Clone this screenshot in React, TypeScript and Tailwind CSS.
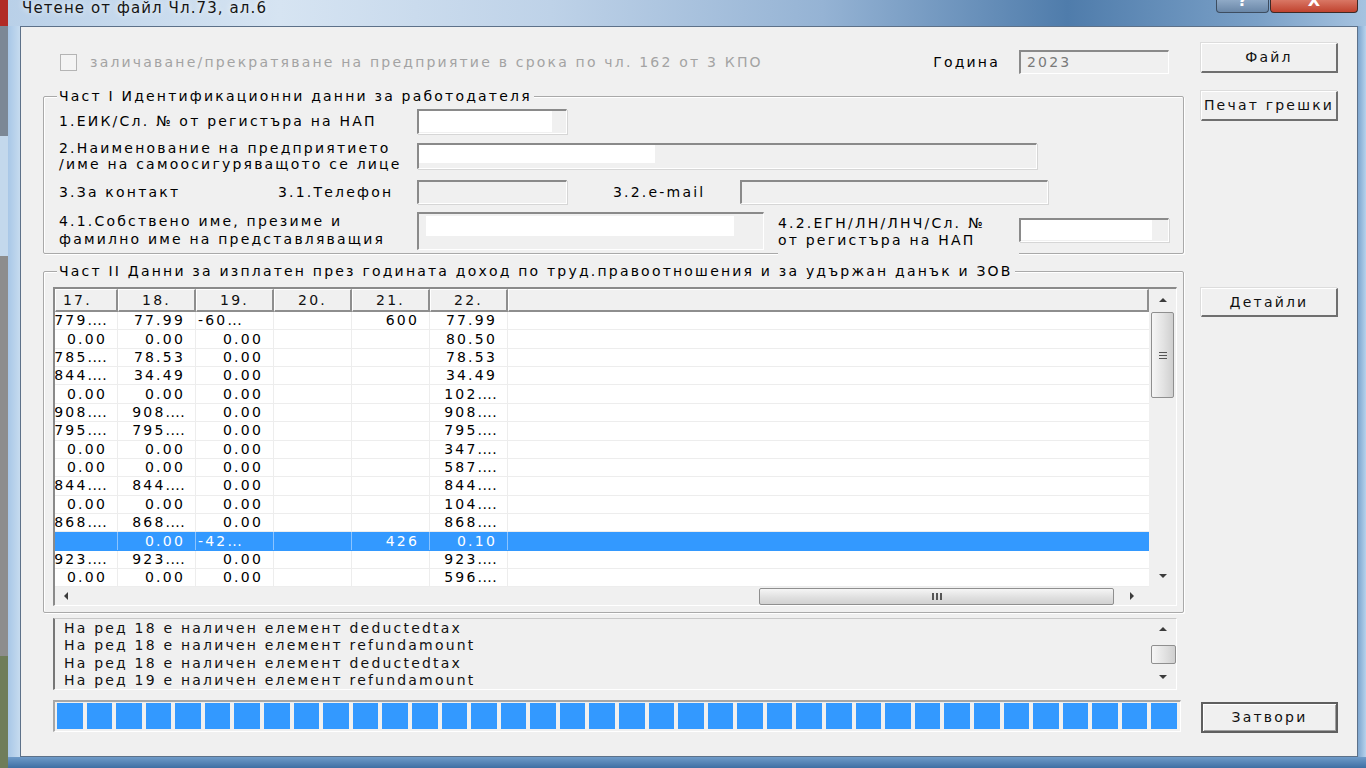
import React from "react";

const ROWS: string[][] = [
  ["7779....", "77.99", "-60...", "", "600", "77.99"],
  ["0.00", "0.00", "0.00", "", "", "80.50"],
  ["1785....", "78.53", "0.00", "", "", "78.53"],
  ["2844....", "34.49", "0.00", "", "", "34.49"],
  ["0.00", "0.00", "0.00", "", "", "102...."],
  ["1908....", "908....", "0.00", "", "", "908...."],
  ["1795....", "795....", "0.00", "", "", "795...."],
  ["0.00", "0.00", "0.00", "", "", "347...."],
  ["0.00", "0.00", "0.00", "", "", "587...."],
  ["2844....", "844....", "0.00", "", "", "844...."],
  ["0.00", "0.00", "0.00", "", "", "104...."],
  ["1868....", "868....", "0.00", "", "", "868...."],
  ["", "0.00", "-42...", "", "426", "0.10"],
  ["1923....", "923....", "0.00", "", "", "923...."],
  ["0.00", "0.00", "0.00", "", "", "596...."],
];
const SELECTED = 12;

const LOG = [
  "На ред 18 е наличен елемент deductedtax",
  "На ред 18 е наличен елемент refundamount",
  "На ред 18 е наличен елемент deductedtax",
  "На ред 19 е наличен елемент refundamount",
];

const COL_W = ["w-[63px]", "w-[78px]", "w-[78px]", "w-[78px]", "w-[78px]", "w-[78px]"];

function Arrow({ dir }: { dir: "up" | "down" | "left" | "right" }) {
  const pts = {
    up: "0,4 4,0 8,4",
    down: "0,0 8,0 4,4",
    left: "4,0 4,8 0,4",
    right: "0,0 0,8 4,4",
  }[dir];
  const vertical = dir === "up" || dir === "down";
  return (
    <svg width={vertical ? 8 : 4} height={vertical ? 4 : 8} viewBox={vertical ? "0 0 8 4" : "0 0 4 8"}>
      <polygon points={pts} fill="#3c3c3c" />
    </svg>
  );
}

// truncated grid values: the dots sit tighter than the digits
function CellText({ v }: { v: string }) {
  const i = v.indexOf("...");
  if (i < 0) return <span className="shrink-0">{v}</span>;
  return (
    <span className="shrink-0">
      {v.slice(0, i)}
      <span className="tracking-[0.4px]">{v.slice(i)}</span>
    </span>
  );
}

function Button({ children, def, className }: { children: React.ReactNode; def?: boolean; className: string }) {
  return (
    <div
      className={`${className} w-[137px] flex items-center justify-center bg-[#f0f0f0] text-[#111] ${
        def
          ? "border-2 border-[#5f5f5f] shadow-[inset_1px_1px_0_#fff,inset_-1px_-1px_0_#a0a0a0]"
          : "border-t border-l border-t-white border-l-white border-r-2 border-b-2 border-r-[#6f6f6f] border-b-[#6f6f6f] shadow-[-1px_-1px_0_#dcdcdc]"
      }`}
    >
      <span>{children}</span>
    </div>
  );
}

function Field({ className, fill }: { className: string; fill?: string }) {
  return (
    <div
      className={`${className} shrink-0 bg-[#f0f0f0] border-t-2 border-l-2 border-t-[#8a8a8a] border-l-[#8a8a8a] border-b border-r border-b-white border-r-white shadow-[1px_1px_0_#d6d6d6]`}
    >
      {fill && <div className={`${fill} bg-white`} />}
    </div>
  );
}

function HeaderCell({ w, children, left }: { w: string; children?: React.ReactNode; left?: boolean }) {
  return (
    <div
      className={`${w} shrink-0 h-full flex items-center ${
        left ? "pl-[7px]" : "justify-center"
      } bg-[#f0f0f0] border-t border-l border-t-white border-l-white border-r-2 border-b-2 border-r-[#8e8e8e] border-b-[#8e8e8e] text-[#111]`}
    >
      {children}
    </div>
  );
}

export default function App() {
  return (
    <div className="w-[1366px] h-[768px] overflow-hidden flex bg-[#6b6b6b] font-['DejaVu_Sans',sans-serif] text-[14px] tracking-[2.2px] text-black">
      {/* desktop strip behind */}
      <div className="w-[8px] flex flex-col">
        <div className="h-[26px] bg-[#b12a25]" />
        <div className="h-[110px] bg-[#7c8896]" />
        <div className="h-[120px] bg-[#c3d8ec]" />
        <div className="h-[400px] bg-[#8d8d8d]" />
        <div className="flex-1 bg-[#6f7d5a]" />
      </div>

      {/* window */}
      <div className="flex-1 flex flex-col bg-[linear-gradient(90deg,#b9d0e8_0%,#d6e4f2_20%,#bed2e8_40%,#95b3d4_60%,#4f7cab_78%,#7aa0c7_92%,#a6c3e0_100%)]">
        {/* title bar */}
        <div className="h-[26px] flex items-start">
          <div className="pl-[14px] text-[15px] leading-[17px] tracking-[1.1px] text-[#151515] [text-shadow:0_0_6px_#ffffff]">
            Четене от файл Чл.73, ал.6
          </div>
          <div className="flex-1" />
          <div className="w-[53px] h-[13px] overflow-hidden rounded-b-[4px] border border-t-0 border-[#3d4d60] bg-[linear-gradient(180deg,#8fa9c6,#6a87a8)] flex justify-center">
            <span className="-mt-[8px] text-[16px] font-bold text-white tracking-normal leading-[18px]">?</span>
          </div>
          <div className="ml-[1px] mr-[8px] w-[88px] h-[13px] overflow-hidden rounded-b-[4px] border border-t-0 border-[#3d2a26] bg-[linear-gradient(180deg,#d97765,#c0432f)] flex justify-center">
            <span className="-mt-[8px] text-[16px] font-bold text-white tracking-normal leading-[18px]">X</span>
          </div>
        </div>

        <div className="flex h-[731px]">
          <div className="w-[12px] bg-[linear-gradient(90deg,#a8c7e7,#c6dbef)]" />

          {/* client area */}
          <div className="w-[1338px] h-full bg-[#f0f0f0] border border-[#5d7189] flex">
            {/* left part */}
            <div className="w-[1165px] flex flex-col">
              {/* top row */}
              <div className="mt-[23px] h-[24px] flex items-center">
                <div className="ml-[39px] w-[17px] h-[17px] border border-[#b4b4b4] bg-[#f4f4f4]" />
                <span className="ml-[13px] text-[#a3a3a3]">
                  заличаване/прекратяване на предприятие в срока по чл. 162 от 3 КПО
                </span>
                <div className="flex-1" />
                <span className="mr-[19px]">Година</span>
                <div className="w-[150px] h-[24px] mr-[17px] bg-[#f0f0f0] border-t-2 border-l-2 border-t-[#8a8a8a] border-l-[#8a8a8a] border-b border-r border-b-white border-r-white flex items-center pl-[6px] text-[#7a7a7a]">
                  2023
                </div>
              </div>

              {/* Част I */}
              <div className="relative mt-[22px] ml-[22px] w-[1141px] h-[158px] border border-[#a9a9a9] shadow-[inset_1px_1px_0_#fff,1px_1px_0_#fff] rounded-[2px] pl-[15px] pt-[12px] flex flex-col">
                <span className="absolute -top-[10px] left-[13px] px-[2px] bg-[#f0f0f0] leading-[18px]">
                  Част I Идентификационни данни за работодателя
                </span>
                <div className="h-[25px] flex items-center">
                  <div className="w-[358px]">1.ЕИК/Сл. № от регистъра на НАП</div>
                  <Field className="w-[150px] h-[25px]" fill="w-[133px] h-[21px]" />
                </div>
                <div className="mt-[9px] h-[26px] flex items-center">
                  <div className="w-[358px] leading-[16px]">
                    <div>2.Наименование на предприятието</div>
                    <div>/име на самоосигуряващото се лице</div>
                  </div>
                  <Field className="w-[620px] h-[26px]" fill="w-[236px] h-[18px]" />
                </div>
                <div className="mt-[11px] h-[24px] flex items-center">
                  <div className="w-[219px]">3.За контакт</div>
                  <div className="w-[139px]">3.1.Телефон</div>
                  <Field className="w-[150px] h-[24px]" />
                  <div className="ml-[46px] w-[127px]">3.2.e-mail</div>
                  <Field className="w-[308px] h-[24px]" />
                </div>
                <div className="mt-[8px] h-[38px] flex items-start">
                  <div className="w-[358px] leading-[18px]">
                    <div>4.1.Собствено име, презиме и</div>
                    <div>фамилно име на представляващия</div>
                  </div>
                  <div className="w-[347px] h-[38px] shrink-0 bg-[#f0f0f0] border-t-2 border-l-2 border-t-[#8a8a8a] border-l-[#8a8a8a] border-b border-r border-b-white border-r-white pl-[7px] pt-[2px]">
                    <div className="w-[308px] h-[20px] bg-white" />
                  </div>
                  <div className="ml-[14px] w-[241px] mt-[3px] leading-[17px] bg-[#f0f0f0] relative z-10 pb-[6px]">
                    <div>4.2.ЕГН/ЛН/ЛНЧ/Сл. №</div>
                    <div>от регистъра на НАП</div>
                  </div>
                  <div className="mt-[6px]">
                    <Field className="w-[150px] h-[24px]" fill="w-[131px] h-[20px]" />
                  </div>
                </div>
              </div>

              {/* Част II */}
              <div className="relative mt-[17px] ml-[22px] w-[1141px] h-[342px] border border-[#a9a9a9] shadow-[inset_1px_1px_0_#fff,1px_1px_0_#fff] rounded-[2px] pl-[9px] pt-[15px]">
                <span className="absolute -top-[10px] left-[13px] px-[2px] bg-[#f0f0f0] leading-[18px]">
                  Част II Данни за изплатен през годината доход по труд.правоотношения и за удържан данък и ЗОВ
                </span>

                {/* data grid */}
                <div className="w-[1124px] h-[319px] border-t-2 border-l-2 border-t-[#8a8a8a] border-l-[#8a8a8a] border-b border-r border-b-white border-r-white flex">
                  <div className="w-[1094px] flex flex-col">
                    <div className="h-[23px] flex">
                      <HeaderCell w="w-[63px]" left>17.</HeaderCell>
                      <HeaderCell w="w-[78px]">18.</HeaderCell>
                      <HeaderCell w="w-[78px]">19.</HeaderCell>
                      <HeaderCell w="w-[78px]">20.</HeaderCell>
                      <HeaderCell w="w-[78px]">21.</HeaderCell>
                      <HeaderCell w="w-[78px]">22.</HeaderCell>
                      <HeaderCell w="flex-1" />
                    </div>
                    <div className="flex-1 overflow-hidden bg-white">
                      {ROWS.map((row, r) => {
                        const sel = r === SELECTED;
                        return (
                          <div
                            key={r}
                            className={`h-[18.36px] flex border-b ${
                              sel ? "bg-[#3399ff] text-white border-b-[#3399ff]" : "border-b-[#ededed]"
                            }`}
                          >
                            {row.map((v, c) => (
                              <div
                                key={c}
                                className={`${COL_W[c]} shrink-0 h-full flex items-center overflow-hidden whitespace-nowrap border-r ${
                                  sel ? "border-r-[#8cc4ff]" : "border-r-[#ededed]"
                                } ${v.startsWith("-") ? "justify-start pl-[2px]" : "justify-end pr-[10px]"}`}
                              >
                                <CellText v={v} />
                              </div>
                            ))}
                            <div className="flex-1" />
                          </div>
                        );
                      })}
                    </div>
                    {/* horizontal scrollbar */}
                    <div className="h-[18px] bg-[#f0f0f0] flex items-center">
                      <div className="w-[17px] flex justify-center ml-[2px]">
                        <Arrow dir="left" />
                      </div>
                      <div className="ml-[685px] w-[355px] h-[17px] rounded-[2px] border border-[#8f8f8f] bg-[linear-gradient(180deg,#f5f5f5,#dedede_60%,#d2d2d2)] flex items-center justify-center gap-[2px]">
                        <div className="w-[2px] h-[7px] bg-[#555]" />
                        <div className="w-[2px] h-[7px] bg-[#555]" />
                        <div className="w-[2px] h-[7px] bg-[#555]" />
                      </div>
                      <div className="flex-1 flex justify-center">
                        <Arrow dir="right" />
                      </div>
                    </div>
                  </div>

                  {/* vertical scrollbar */}
                  <div className="flex-1 flex flex-col bg-[#f0f0f0]">
                    <div className="h-[22px] flex items-center justify-center">
                      <Arrow dir="up" />
                    </div>
                    <div className="mx-[2px] mt-[1px] h-[86px] rounded-[2px] border border-[#8f8f8f] bg-[linear-gradient(90deg,#f6f6f6,#e2e2e2_55%,#cfcfcf)] flex flex-col items-center justify-center gap-[2px]">
                      <div className="w-[8px] h-[1px] bg-[#555]" />
                      <div className="w-[8px] h-[1px] bg-[#555]" />
                      <div className="w-[8px] h-[1px] bg-[#555]" />
                    </div>
                    <div className="flex-1" />
                    <div className="h-[22px] flex items-center justify-center">
                      <Arrow dir="down" />
                    </div>
                    <div className="h-[18px]" />
                  </div>
                </div>
              </div>

              {/* log list */}
              <div className="mt-[5px] ml-[32px] w-[1124px] h-[72px] border-t border-l-2 border-t-[#c8c8c8] border-l-[#777] border-b border-r border-b-white border-r-white flex">
                <div className="flex-1 pl-[9px] pt-[1px] leading-[17.3px] text-[#111]">
                  {LOG.map((l, i) => (
                    <div key={i}>{l}</div>
                  ))}
                </div>
                <div className="w-[26px] flex flex-col items-center">
                  <div className="h-[20px] flex items-center justify-center">
                    <Arrow dir="up" />
                  </div>
                  <div className="mt-[6px] w-[25px] h-[19px] rounded-[2px] border border-[#8f8f8f] bg-[linear-gradient(90deg,#f6f6f6,#e2e2e2_55%,#cfcfcf)]" />
                  <div className="flex-1 flex items-center justify-center">
                    <Arrow dir="down" />
                  </div>
                </div>
              </div>

              {/* progress bar */}
              <div className="mt-[10px] ml-[32px] w-[1128px] h-[32px] border-t-2 border-l-2 border-t-[#a7a7a7] border-l-[#a7a7a7] border-b border-r border-b-white border-r-white pl-[2px] pr-[3px] pt-[1px] flex gap-[4px]">
                {Array.from({ length: 38 }).map((_, i) => (
                  <div key={i} className="flex-1 h-[26px] bg-[#3399ff]" />
                ))}
              </div>
            </div>

            {/* right buttons */}
            <div className="ml-[15px] flex flex-col">
              <Button className="mt-[16px] h-[30px]">Файл</Button>
              <Button className="mt-[18px] h-[30px]">Печат грешки</Button>
              <Button className="mt-[167px] h-[29px]">Детайли</Button>
              <Button className="mt-[385px] h-[31px]" def>
                Затвори
              </Button>
            </div>
          </div>

          <div className="w-[8px] bg-[linear-gradient(90deg,#7ea6cf,#b7d2ec)]" />
        </div>

        <div className="flex-1 bg-[linear-gradient(180deg,#6f9bc9,#3f6fa3)]" />
      </div>
    </div>
  );
}
